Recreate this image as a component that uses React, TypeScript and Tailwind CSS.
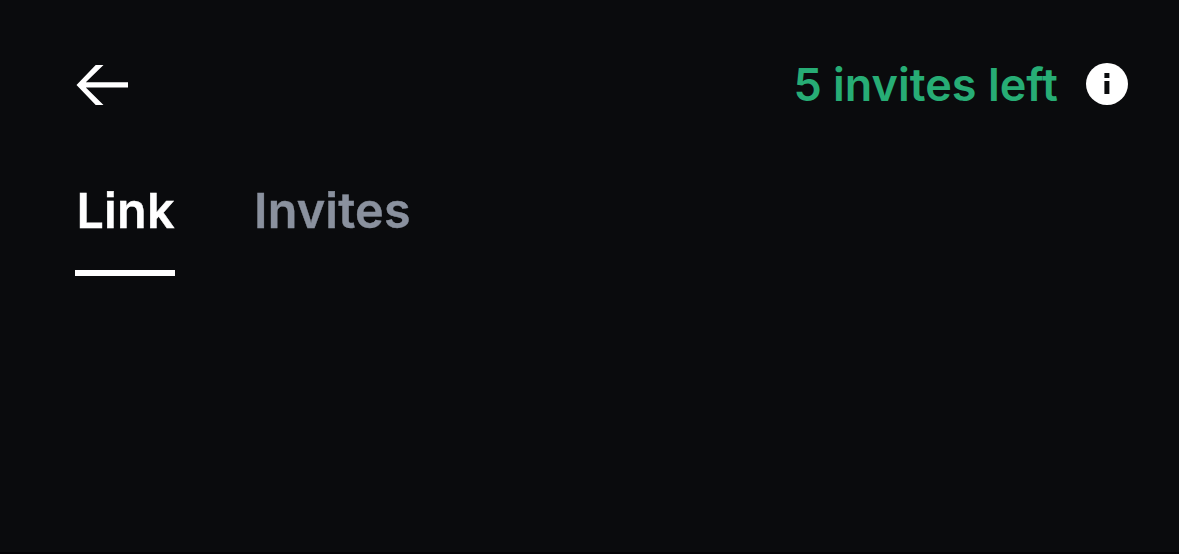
export default function App() {
  return (
    <main className="flex h-[554px] w-full flex-col border-b-2 border-[#030205] bg-[#0a0b0d] font-['Inter',sans-serif] font-semibold">
      <header className="flex h-[168px] items-center justify-between pl-[75px] pr-[50px]">
        <button aria-label="Back" className="block pt-0.5">
          <svg width="54" height="42" viewBox="75 63.800 54 42" fill="#fff">
            <path d="M95.700 64.700h7.800L85.800 82H128v5.400H85.800l17.700 17.400h-7.800L76.500 84.700z" />
          </svg>
        </button>
        <div className="flex items-center gap-[27px]">
          <span className="text-[45px] leading-none text-[#27ad75]">5 invites left</span>
          <svg width="44" height="44" viewBox="0 0 44 44">
            <circle cx="22" cy="22" r="21" fill="#fff" />
            <path d="M19.400 11h5v5h-5zM19.400 19h5v13h-5z" fill="#0a0b0d" />
          </svg>
        </div>
      </header>
      <nav className="flex h-[108px] items-start gap-[79px] pl-[75px] text-[48.500px] leading-[86px] tracking-[0.2px] [font-feature-settings:'ss07']">
        <button className="flex h-[108px] w-[100px] items-start whitespace-nowrap border-b-[6px] border-white pl-[1.500px] text-white [-webkit-text-stroke:0.4px_white]">Link</button>
        <button className="flex h-[108px] items-start text-[#8a919e] [-webkit-text-stroke:0.4px_#8a919e]">Invites</button>
      </nav>
    </main>
  );
}
